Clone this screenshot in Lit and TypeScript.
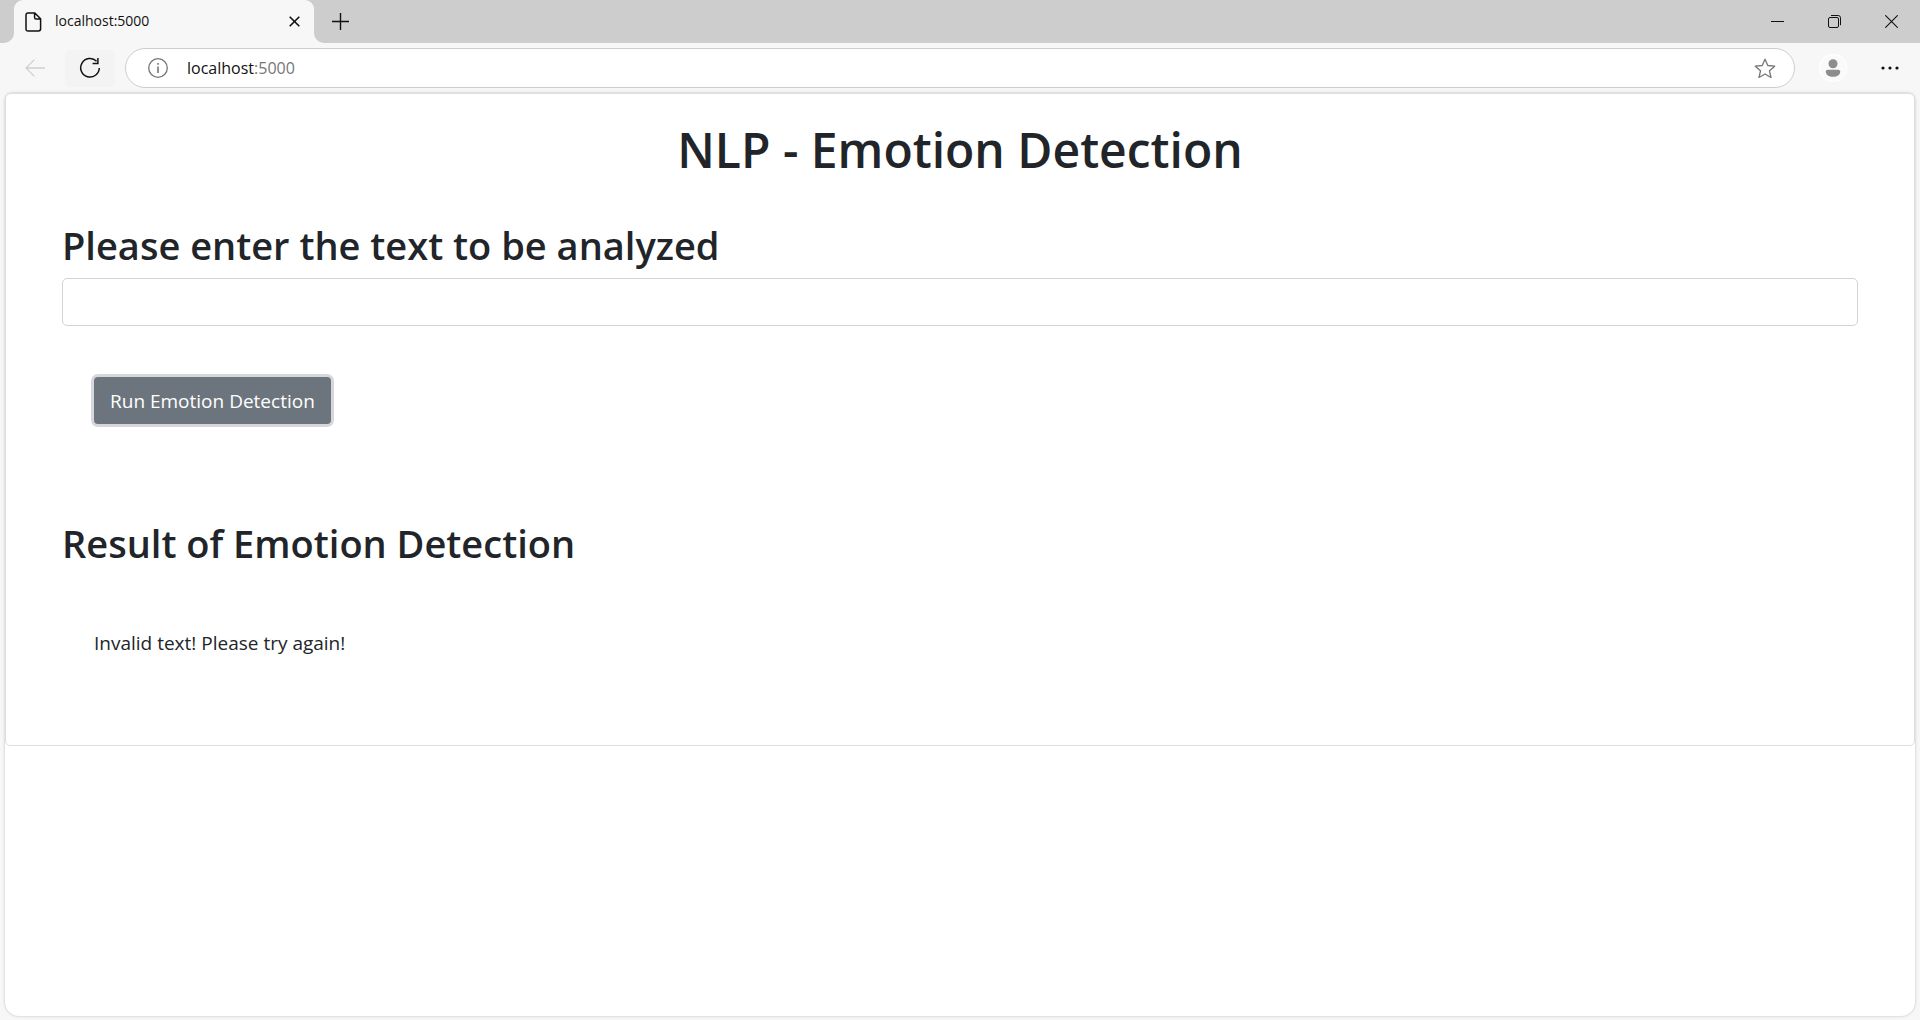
import { LitElement, html, css } from "lit";
import { customElement, state } from "lit/decorators.js";

/** Tab strip with the window controls. */
@customElement("tab-strip")
class TabStrip extends LitElement {
  static styles = css`
    :host {
      display: flex;
      height: 43px;
      background: #cdcdcd;
      color: #111;
    }
    button {
      border: 0;
      padding: 0;
      background: none;
      color: inherit;
      display: grid;
      place-items: center;
    }
    svg {
      display: block;
      fill: none;
      stroke: currentColor;
    }
    .edge {
      width: 14px;
      background: #f7f7f7;
    }
    .edge::before {
      content: "";
      display: block;
      height: 43px;
      background: #cdcdcd;
    }
    .left::before {
      border-bottom-right-radius: 10px;
    }
    .right {
      flex: 1;
      display: flex;
      background: #f7f7f7;
    }
    .rest {
      flex: 1;
      display: flex;
      justify-content: space-between;
      background: #cdcdcd;
      border-bottom-left-radius: 10px;
    }
    .tab {
      box-sizing: border-box;
      width: 300px;
      display: flex;
      align-items: center;
      padding: 0 9px 0 11px;
      border-radius: 9px 9px 0 0;
      background: #f7f7f7;
    }
    .name {
      flex: 1;
      padding: 0 0 1px 13px;
      font-size: 14px;
      line-height: 20px;
    }
    .close {
      width: 22px;
      height: 22px;
    }
    .new {
      width: 53px;
    }
    .windows {
      display: flex;
    }
    .windows button {
      width: 57px;
    }
  `;

  render() {
    return html`
      <div class="edge left"></div>
      <div class="tab">
        <svg width="17" height="20" viewBox="0 0 17 20" stroke-width="1.5" stroke-linejoin="round">
          <path d="M3.2 1H9.8L15.6 6.8V16.8Q15.6 19 13.4 19H3.2Q1 19 1 16.8V3.2Q1 1 3.2 1ZM9.6 1V5.4Q9.6 7 11.2 7H15.6" />
        </svg>
        <span class="name">localhost:5000</span>
        <button class="close" aria-label="Close tab">
          <svg width="11" height="11" viewBox="0 0 11 11" stroke-width="1.6">
            <path d="M.7 .7 10.3 10.3M10.3 .7 .7 10.3" />
          </svg>
        </button>
      </div>
      <div class="right">
        <div class="rest">
          <button class="new" aria-label="New tab">
            <svg width="17" height="17" viewBox="0 0 17 17" stroke-width="1.4">
              <path d="M8.5 0V17M0 8.5H17" />
            </svg>
          </button>
          <div class="windows">
            <button aria-label="Minimize">
              <svg width="13" height="13" viewBox="0 0 13 13"><path d="M0 6.5H13" /></svg>
            </button>
            <button aria-label="Restore">
              <svg width="13" height="13" viewBox="0 0 13 13">
                <rect x=".5" y="2.5" width="10" height="10" rx="1.5" />
                <path d="M3 .5H10.2Q12.5 .5 12.5 2.8V10.2" />
              </svg>
            </button>
            <button aria-label="Close window">
              <svg width="13" height="13" viewBox="0 0 13 13" stroke-width="1.1"><path d="M.3 .3 12.7 12.7M12.7 .3 .3 12.7" /></svg>
            </button>
          </div>
        </div>
      </div>
    `;
  }
}

/** Navigation buttons, address field and menu. */
@customElement("address-bar")
class AddressBar extends LitElement {
  static styles = css`
    :host {
      display: flex;
      align-items: center;
      height: 50px;
      padding: 0 5px 0 10px;
      color: #111;
    }
    button {
      width: 50px;
      height: 37px;
      border: 0;
      padding: 0;
      border-radius: 5px;
      background: none;
      color: inherit;
      display: grid;
      place-items: center;
      flex: none;
    }
    svg {
      display: block;
      fill: none;
      stroke: currentColor;
    }
    .back {
      color: #cfcfcf;
    }
    .reload {
      margin: 0 10px 0 5px;
      background: #f3f3f3;
    }
    .field {
      box-sizing: border-box;
      flex: 1;
      display: flex;
      align-items: center;
      height: 40px;
      border: 1px solid #cdcdcd;
      border-radius: 20px;
      background: #fff;
      color: #767676;
    }
    .field button {
      width: 58px;
    }
    .field .info {
      margin-left: 3px;
    }
    .url {
      flex: 1;
      font-size: 16px;
      line-height: 24px;
    }
    .host {
      color: #111;
    }
    .profile {
      margin: 0 7px 0 13px;
    }
    .disc {
      width: 28px;
      height: 28px;
      border-radius: 14px;
      background: #fafafa;
      box-shadow: inset 0 0 0 1px #fff;
      display: grid;
      place-items: center;
      color: #8d8d8d;
    }
    .solid {
      fill: currentColor;
      stroke: none;
    }
  `;

  render() {
    return html`
      <button class="back" aria-label="Back" disabled>
        <svg width="20" height="18" viewBox="0 0 20 18" stroke-width="1.3">
          <path d="M9.4 .6 1 9 9.4 17.4M1 9H20" />
        </svg>
      </button>
      <button class="reload" aria-label="Reload">
        <svg width="22" height="22" viewBox="0 0 22 22" stroke-width="1.5">
          <path d="M17.6 4.2A9.3 9.3 0 1 0 20.3 11M18.9 1V6.6H13.6" />
        </svg>
      </button>
      <div class="field">
        <button class="info" aria-label="Site information">
          <svg width="20" height="20" viewBox="0 0 20 20" stroke-width="1.3">
            <circle cx="10" cy="10" r="9.3" />
            <path d="M10 8.6V15M10 5V6.8" stroke-width="1.6" />
          </svg>
        </button>
        <span class="url"><span class="host">localhost</span>:5000</span>
        <button aria-label="Add to favorites">
          <svg width="22" height="21" viewBox="0 0 22 21" stroke-width="1.3" stroke-linejoin="round">
            <path d="M11 1.2 13.8 7.5 20.7 8.2 15.5 12.8 17 19.5 11 16 5 19.5 6.5 12.8 1.3 8.2 8.2 7.5Z" />
          </svg>
        </button>
      </div>
      <button class="profile" aria-label="Profile">
        <span class="disc">
          <svg class="solid" width="16" height="18" viewBox="0 0 16 18">
            <circle cx="8" cy="4.7" r="4.5" />
            <path d="M2.5 10.8H13.5Q15.2 10.8 15.2 12.5C15.2 16 12 17.8 8 17.8S.8 16 .8 12.5Q.8 10.8 2.5 10.8Z" />
          </svg>
        </span>
      </button>
      <button aria-label="Settings and more">
        <svg class="solid" width="18" height="4" viewBox="0 0 18 4">
          <circle cx="2" cy="2" r="1.6" /><circle cx="9" cy="2" r="1.6" /><circle cx="16" cy="2" r="1.6" />
        </svg>
      </button>
    `;
  }
}

/** The emotion detection form and its result. */
@customElement("emotion-page")
class EmotionPage extends LitElement {
  @state() private result = "Invalid text! Please try again!";

  static styles = css`
    :host {
      display: block;
      color: #212529;
      font-size: 19px;
      line-height: 30px;
    }
    .card {
      border: 1px solid #dfdfdf;
      border-radius: 5px;
      padding: 26px 56px 87px;
    }
    h1,
    h2 {
      margin: 0;
      font-weight: 600;
    }
    h1 {
      font-size: 48px;
      line-height: 60px;
      text-align: center;
    }
    h2 {
      font-size: 38px;
      line-height: 48px;
    }
    .prompt {
      display: block;
      margin: 41px 0 9px;
    }
    input {
      box-sizing: border-box;
      display: block;
      width: 100%;
      height: 48px;
      padding: 8px 15px;
      border: 1px solid #ced4da;
      border-radius: 5px;
      background: #fff;
      font: inherit;
      color: #495057;
    }
    .run {
      display: block;
      height: 47px;
      margin: 51px 0 95px 32px;
      padding: 0 16px;
      border: 0;
      border-radius: 4px;
      background: #6c757d;
      box-shadow: 0 0 0 3px #d5d7db;
      color: #fff;
      font: inherit;
    }
    .result {
      margin: 61px 0 0 32px;
    }
  `;

  render() {
    return html`
      <main class="card">
        <h1>NLP - Emotion Detection</h1>
        <h2><label class="prompt" for="text">Please enter the text to be analyzed</label></h2>
        <input id="text" type="text" />
        <button class="run">Run Emotion Detection</button>
        <h2>Result of Emotion Detection</h2>
        <div class="result">${this.result}</div>
      </main>
    `;
  }
}

@customElement("app-root")
class AppRoot extends LitElement {
  static styles = css`
    :host {
      box-sizing: border-box;
      display: flex;
      flex-direction: column;
      min-height: 100vh;
      padding-bottom: 4px;
      background: #f7f7f7;
      font-family: "Segoe UI", "Open Sans", "Noto Sans", sans-serif;
    }
    .view {
      flex: 1;
      margin: 0 5px;
      border-radius: 8px 8px 14px 14px;
      background: #fff;
      box-shadow: 0 0 3px #bdbdbd;
    }
  `;

  render() {
    return html`
      <tab-strip></tab-strip>
      <address-bar></address-bar>
      <emotion-page class="view"></emotion-page>
    `;
  }
}
